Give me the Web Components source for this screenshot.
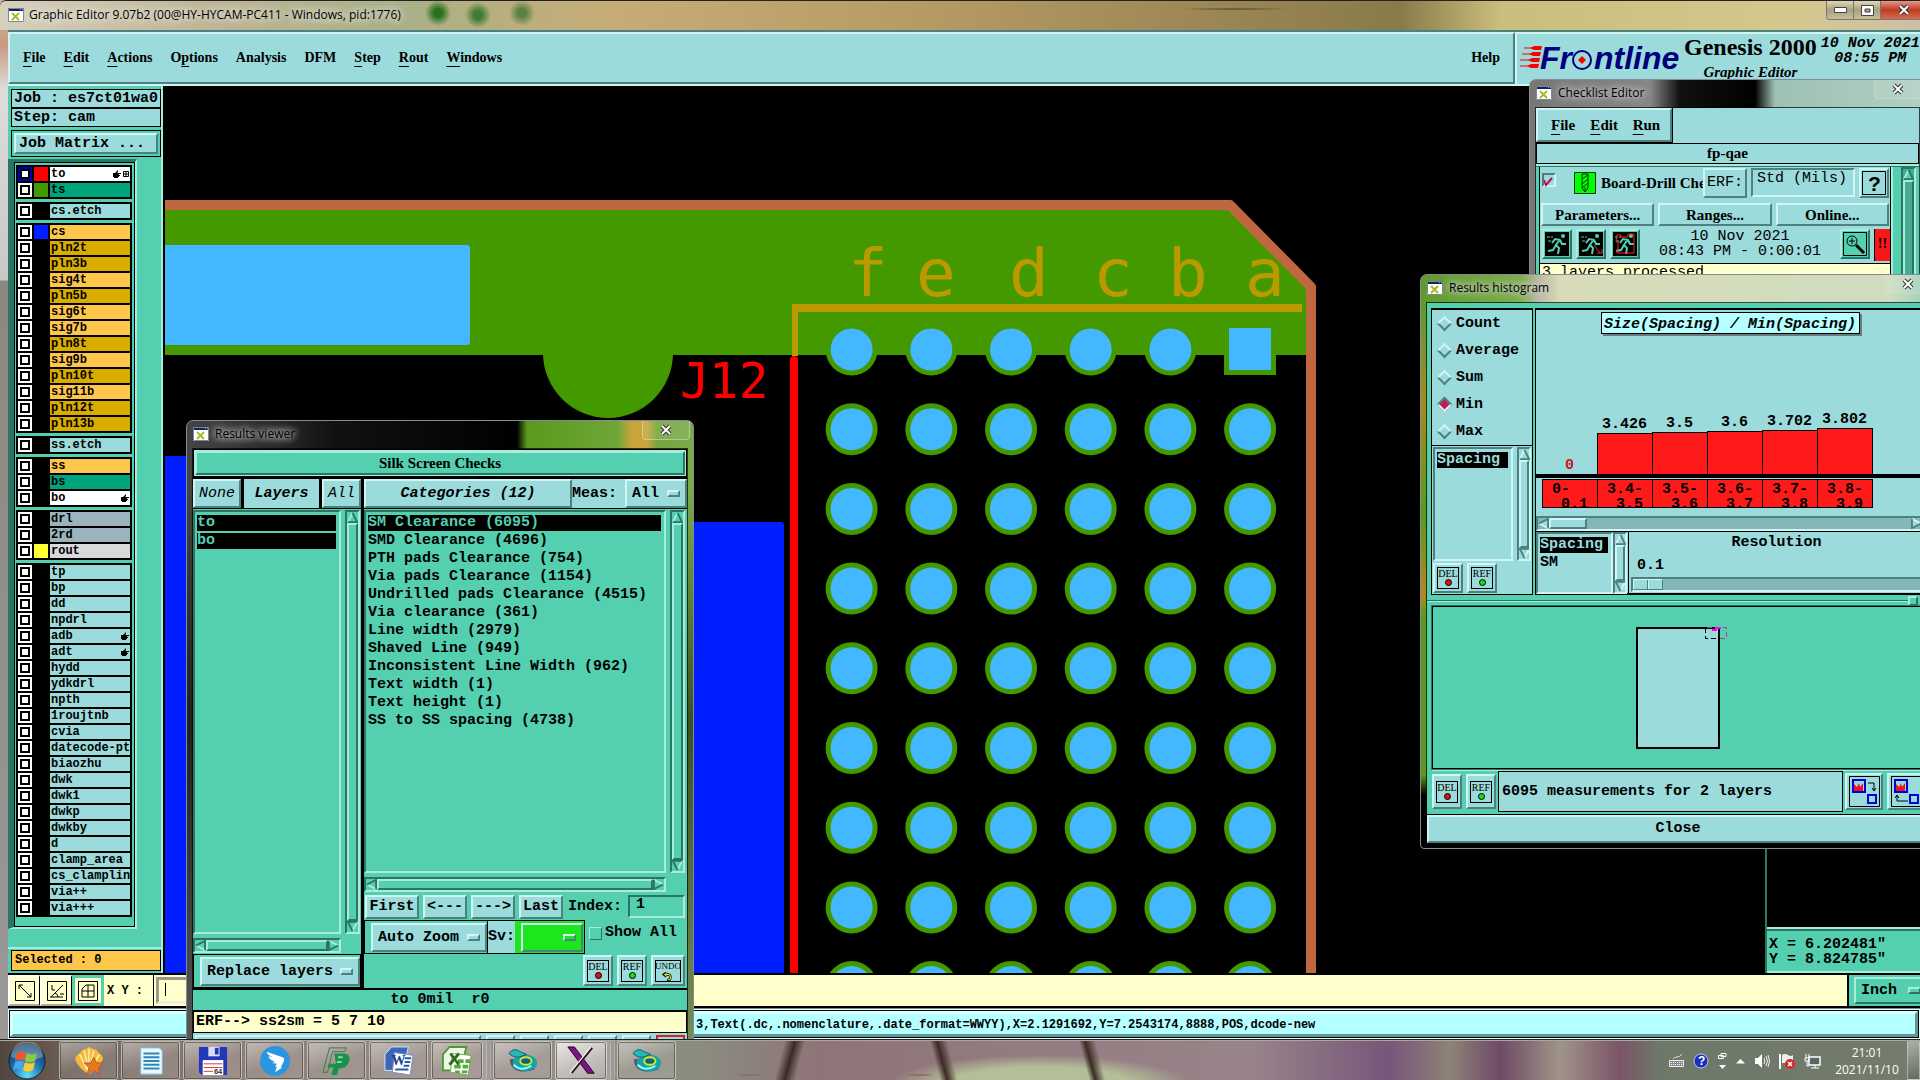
<!DOCTYPE html>
<html lang="en">
<head>
<meta charset="utf-8">
<title>Graphic Editor 9.07b2</title>
<style>
  :root {
    --teal: #54cfb0; --teal-hi: #a8ecdd; --teal-lo: #2c7565;
    --aqua: #9bdbdb; --aqua-hi: #cff6f4; --aqua-lo: #4f8080;
    --cream: #ffffcc; --pale: #b4ffff;
    --mono: "Liberation Mono", "DejaVu Sans Mono", monospace;
    --serif: "Liberation Serif", serif;
    --ui: "Open Sans", "Noto Sans", sans-serif;
  }
  body { margin: 0; font: bold 15px/18px var(--mono); color: #000; background: #000; }
</style>
</head>
<body>
<desk-top>
  <main-window></main-window>
  <aero-window id="checks" slot="windows" caption="Checklist Editor"><checklist-editor></checklist-editor></aero-window>
  <aero-window id="viewer" slot="windows" caption="Results viewer"><results-viewer></results-viewer></aero-window>
  <aero-window id="histo" slot="windows" caption="Results histogram"><results-histogram></results-histogram></aero-window>
  <task-bar slot="bar"></task-bar>
</desk-top>

<script>
/***************************************************
 * BASE
 * shared rules for every shadow root
 ***************************************************/
const BASE = `
  *, *::before, *::after { box-sizing: border-box; }
  :host { display: block; box-sizing: border-box; }
  button, input, select { font: inherit; color: inherit; margin: 0; padding: 0; border-radius: 0; min-width: 0; }
  ul { list-style: none; margin: 0; padding: 0; }
  .row { display: flex; }
  .grow { flex: 1; min-width: 0; }
  .aqua { --face: var(--aqua); --hi: var(--aqua-hi); --lo: var(--aqua-lo); }
  .teal { --face: var(--teal); --hi: var(--teal-hi); --lo: var(--teal-lo); }
  .up { border: 2px solid; border-color: var(--hi) var(--lo) var(--lo) var(--hi); background: var(--face); }
  .down { border: 2px solid; border-color: var(--lo) var(--hi) var(--hi) var(--lo); background: var(--face); }
`;

class Widget extends HTMLElement {
  constructor() {
    super();
    this.attachShadow({ mode: 'open' });
  }
  connectedCallback() {
    this.shadowRoot.innerHTML = `<style>${BASE}${this.css()}</style>${this.html()}`;
  }
  css() { return ''; }
  html() { return '<slot></slot>'; }
}

/***************************************************
 * MOTIF CONTROLS
 ***************************************************/
class MotifButton extends Widget {
  css() {
    return `button { width: 100%; height: 100%; display: flex; align-items: center; justify-content: center; white-space: pre; }
      :host([start]) button { justify-content: flex-start; padding-left: 3px; }`;
  }
  html() {
    const tone = this.hasAttribute('teal') ? 'teal' : 'aqua';
    return `<button class="up ${tone}"><slot></slot></button>`;
  }
}

// option menu with the small raised knob
class MotifOption extends Widget {
  css() {
    return `.box { display: flex; align-items: center; height: 100%; padding: 0 5px; }
      select { appearance: none; border: 0; background: none; flex: 1; height: 20px; outline: 0; }
      i { width: 13px; height: 7px; flex: none; }`;
  }
  html() {
    const tone = this.hasAttribute('teal') ? 'teal' : 'aqua';
    const face = this.hasAttribute('green') ? 'style="--face:#1ce61c"' : '';
    return `<div class="box up ${tone}" ${face}>
      <select aria-label="${this.getAttribute('label')}"><option>${this.getAttribute('value') || ''}</option></select>
      <i class="up"></i></div>`;
  }
}

class MotifScroll extends Widget {
  css() {
    return `.bar { display: flex; flex-direction: column; width: 100%; height: 100%; }
      :host([flat]) .bar { flex-direction: row; }
      svg { width: 11px; height: 11px; flex: none; display: block; }
      .thumb { flex: 1; }
      :host([short]) .thumb { flex: none; width: 38px; }
      :host([short]) .bar, :host([trough]) .bar { background: #83b8b8; }
      :host([trough]) .bar, :host([trough]) .thumb { background: #45ab92; }
      .sp { flex: 1; display: none; }
      :host([short]) .sp { display: block; }`;
  }
  html() {
    const tone = this.hasAttribute('aqua') ? 'aqua' : 'teal';
    const flat = this.hasAttribute('flat');
    const arrow = d => `<svg viewBox="0 0 12 12"><g transform="rotate(${d} 6 6)">
      <path d="M6 1L11 11H1Z" style="fill:var(--face)"/>
      <path d="M1 11L6 1" stroke-width="2" style="stroke:var(--hi)"/>
      <path d="M6 1L11 11H1" fill="none" stroke-width="2" style="stroke:var(--lo)"/></g></svg>`;
    return `<div class="bar down ${tone}">${arrow(flat ? -90 : 0)}<div class="thumb up"></div><div class="sp"></div>${arrow(flat ? 90 : 180)}</div>`;
  }
}

// list box; items split by "|", first "marked" ones are inverted
class MotifList extends Widget {
  css() {
    return `.box { height: 100%; padding: 2px 3px 2px 2px; overflow: hidden; }
      li { height: 18px; padding: 1px 0; white-space: pre; }
      li span { display: block; height: 16px; line-height: 16px; }
      li.on span { background: #000; color: var(--face); }`;
  }
  html() {
    const tone = this.hasAttribute('aqua') ? 'aqua' : 'teal';
    const marked = Number(this.getAttribute('marked'));
    const items = this.getAttribute('items').split('|');
    return `<ul class="box down ${tone}">${items.map((t, i) =>
      `<li class="${i < marked ? 'on' : ''}"><span>${t}</span></li>`).join('')}</ul>`;
  }
}

// square button with a framed pictogram
class ToolButton extends Widget {
  css() {
    return `button { width: 100%; height: 100%; display: flex; align-items: center; justify-content: center; }
      .pic { width: 22px; height: 22px; border: 1px solid #000; display: flex; flex-direction: column; align-items: center;
        font: 10px/11px var(--serif); }
      :host([wide]) .pic { width: 26px; font-size: 9px; }
      .dot { width: 7px; height: 7px; border: 1px solid #000; border-radius: 50%; }`;
  }
  html() {
    const kind = this.getAttribute('kind');
    const mark = {
      DEL: '<span class="dot" style="background:#e01010"></span>',
      REF: '<span class="dot" style="background:#18e018"></span>',
      UNDO: '<svg width="12" height="11" viewBox="0 0 12 11"><path d="M4 1L1 3l3 2.500M2 3h4q3 0 3 3.500T5 10" fill="none" stroke="#000" stroke-width="3"/><path d="M4 2L2 3l2 2M3 3h3q3 0 3 3.500T6 9.500" fill="none" stroke="#ee3" stroke-width="1.300"/></svg>'
    }[kind];
    return `<button class="up aqua"><span class="pic">${kind}${mark}</span></button>`;
  }
}

const X_ICON = `<svg width="16" height="16" viewBox="0 0 16 16"><path d="M0 1h16v14H0Z" fill="#fff"/>
  <path d="M0 1h16v3H0Z" fill="#126"/><path d="M12 2h1m1 0h1" stroke="#fff"/>
  <path d="M4 6l7 7M11 6l-7 7" stroke="#ab2" stroke-width="2"/><path d="M.5 1.500h15v13H.5Z" fill="none" stroke="#789"/></svg>`;
const CLOSE_ICON = `<svg width="12" height="12" viewBox="0 0 12 12"><path d="M2 2l8 8M10 2l-8 8" stroke="#333" stroke-width="4"/>
  <path d="M2 2l8 8M10 2l-8 8" stroke="#fff" stroke-width="2"/></svg>`;

/***************************************************
 * WINDOWS
 ***************************************************/
class AeroWindow extends Widget {
  css() {
    return `:host { position: absolute; display: flex; flex-direction: column; padding: 0 5px 4px;
        background: var(--glass); border: 1px solid #889; border-radius: 7px 7px 4px 4px; }
      header { display: flex; height: 27px; padding-left: 1px; gap: 6px; flex: none; font: 12px/26px var(--ui); margin-right: -2px; }
      header svg { flex: none; }
      header > svg { margin-top: 5px; }
      .t { flex: 1; text-shadow: 0 0 6px #ddd, 0 0 9px #ccc, 0 0 12px #aaa; }
      header button { width: 48px; height: 19px; background: rgba(255,255,255,.1); border: 1px solid rgba(210,220,200,.6);
        border-top: 0; border-radius: 0 0 4px 4px; display: flex; align-items: center; justify-content: center; }
      .in { flex: 1; min-height: 0; border: 1px solid rgba(0,0,0,.7); overflow: hidden; }`;
  }
  html() {
    return `<header>${X_ICON}<span class="t">${this.getAttribute('caption')}</span>
      <button aria-label="Close window">${CLOSE_ICON}</button></header><div class="in"><slot></slot></div>`;
  }
}

class DeskTop extends Widget {
  css() {
    return `:host { position: relative; display: flex; flex-direction: column; height: 100vh; overflow: hidden; }
      ::slotted(main-window) { flex: 1; min-height: 0; }
      ::slotted(task-bar) { position: relative; z-index: 2; height: 40px; }
      ::slotted(#checks) { right: -6px; top: 79px; width: 397px; height: 420px;
        --glass: linear-gradient(90deg, #777 0, #888 120px, #111 150px, #000 225px, #9fc0b4 245px, #b0d0c4); }
      ::slotted(#viewer) { left: 186px; top: 420px; width: 508px; bottom: 7px;
        --glass: linear-gradient(#0000 70px, #0008 300px, #7777), linear-gradient(90deg, #444 0, #333 60px, #111 150px, #000 330px, #5a9a1c 340px, #6ea638 430px, #c9a53c 445px, #c9a53c 460px, #74a63c 470px, #7bab48); }
      ::slotted(#histo) { right: -16px; top: 274px; width: 516px; height: 575px;
        --glass: linear-gradient(#0000 30px, #b8861acc 130px, #5a9a1c 240px, #b8861a 320px, #5a9a1c 340px, #5a9a1c 500px, #000 520px), linear-gradient(90deg, #5f9a2c 0, #7cb04a 100px, #b9b9a0 115px, #d8dcb8 140px, #cfdcc0 470px, #90cdb8); }`;
  }
  html() { return '<slot></slot><slot name="windows"></slot><slot name="bar"></slot>'; }
}

/***************************************************
 * MENU BAR  (underscore marks the mnemonic letter)
 ***************************************************/
class MenuBar extends Widget {
  css() {
    return `nav { height: 100%; display: flex; align-items: center; gap: 18px; padding: 0 13px;
        font: bold var(--size, 14px)/18px var(--serif); }
      button { border: 0; background: none; }
      u { text-underline-offset: 4px; text-decoration-thickness: 1px; }
      .last { margin-left: auto; }`;
  }
  html() {
    const item = (t, c = '') => `<button class="${c}">${t.replace(/_(.)/, '<u>$1</u>')}</button>`;
    return `<nav class="up aqua">${this.getAttribute('items').split('|').map(t => item(t)).join('')}
      ${this.hasAttribute('help') ? item('Help', 'last') : ''}</nav>`;
  }
}

class BrandPanel extends Widget {
  css() {
    return `:host { background: var(--aqua); border-left: 2px solid var(--aqua-hi); border-top: 2px solid var(--aqua-hi); }
      .row { gap: 4px; align-items: flex-start; white-space: nowrap; padding-left: 3px; }
      svg { flex: none; margin-top: 9px; overflow: visible; }
      .name { text-align: center; font: bold 24px/26px var(--serif); flex: none; }
      .name em { display: block; font: italic bold 15px/18px var(--serif); margin-top: 3px; }
      .date { font: italic bold 15px/15px var(--mono); text-align: center; padding-top: 2px; flex: none; }`;
  }
  html() {
    return `<div class="row">
      <svg width="160" height="32" viewBox="0 0 160 32">
        <g stroke="#f00" stroke-width="1"><path d="M4 5h13M2 11h14M0 17h14M0 23h14"/></g>
        <g fill="#f00"><path d="M10 5l4-2h8l-1 4h-7ZM9 11l4-2h8l-1 4h-7ZM8 17l4-2h8l-1 4h-7ZM7 23l4-2h8l-1 4h-7Z"/></g>
        <g fill="#00007c" font-family="Liberation Sans" font-weight="bold" font-style="italic" font-size="32">
          <text x="20" y="26">Fr</text><text x="74" y="26">ntline</text></g>
        <circle cx="62" cy="17" r="9" fill="none" stroke="#00007c" stroke-width="2"/>
        <path d="M62 13l4 4-4 4-4-4Z" fill="#f00"/>
      </svg>
      <div class="name">Genesis 2000<em>Graphic Editor</em></div>
      <div class="date">10 Nov 2021<br>08:55 PM</div>
    </div>`;
  }
}

/***************************************************
 * LAYERS  [name, colour, swatch, marks]
 ***************************************************/
const O = '#ffc64c', G = '#dbac00', A = '#9bdbdb', M = '#00a57c', S = '#9ab3bd', W = '#fff';
const LAYERS = [
  [['to', W, '#f00', 'hg'], ['ts', M, '#449900']],
  [['cs.etch', A]],
  [['cs', O, '#001eff'], ['pln2t', G], ['pln3b', G], ['sig4t', O], ['pln5b', G], ['sig6t', O], ['sig7b', O],
   ['pln8t', G], ['sig9b', O], ['pln10t', G], ['sig11b', O], ['pln12t', G], ['pln13b', G]],
  [['ss.etch', A]],
  [['ss', O], ['bs', M], ['bo', W, '', 'h']],
  [['drl', S], ['2rd', S], ['rout', '#d9d9d9', '#ffff33']],
  ['tp', 'bp', 'dd', 'npdrl', 'adb', 'adt', 'hydd', 'ydkdrl', 'npth', '1roujtnb', 'cvia', 'datecode-pte', 'biaozhu',
   'dwk', 'dwk1', 'dwkp', 'dwkby', 'd', 'clamp_area', 'cs_clampline', 'via++', 'via+++']
    .map(n => [n, A, '', n.startsWith('ad') ? 'h' : ''])
];

class LayerList extends Widget {
  css() {
    return `:host { border: 2px solid; border-color: var(--teal-lo) var(--teal-hi) var(--teal-hi) var(--teal-lo);
        border-left-width: 6px; border-top-width: 3px; background: var(--teal); }
      .frame { border: 1px solid #000; padding: 2px 2px 9px 1px; display: grid; gap: 3px; }
      .group { background: #000; padding: 1px 2px; font: bold 12px/14px var(--mono); }
      .layer { display: grid; grid-template-columns: 14px 14px 1fr; gap: 2px; padding: 1px 0; height: 16px; }
      input { appearance: none; width: 14px; height: 14px; border: 2px solid #fff; background: #fff; box-shadow: inset 0 0 0 2px #000; }
      input:checked { border-color: #0000b0; }
      label { display: flex; align-items: center; padding: 0 1px; overflow: hidden; white-space: nowrap; min-width: 0; }
      label svg { flex: none; margin-left: 2px; }
      label span { flex: 1; }`;
  }
  html() {
    const hand = '<svg width="8" height="8" viewBox="0 0 8 8"><path d="M0 3h2l3-3v2l-1 1h4v1H6v1h1v1H6v1H5v1H1V7H0Z"/></svg>';
    const grid = '<svg width="6" height="6" viewBox="0 0 6 6"><path d="M.5.5h5v5h-5ZM3 0v6M0 3h6" fill="none" stroke="#000"/></svg>';
    const row = ([name, bg, sw = '', marks = '']) => `<div class="layer">
      <input type="checkbox" id="${name}" ${name === 'to' ? 'checked' : ''}><i style="background:${sw || '#000'}"></i>
      <label for="${name}" style="background:${bg}"><span>${name}</span>${marks.includes('h') ? hand : ''}${marks.includes('g') ? grid : ''}</label></div>`;
    return `<div class="frame">${LAYERS.map(g => `<div class="group">${g.map(row).join('')}</div>`).join('')}</div>`;
  }
}

/***************************************************
 * BOARD
 ***************************************************/
class BoardView extends Widget {
  css() { return ':host { background: #000; overflow: hidden; } svg { display: block; width: 100%; height: 100%; font-weight: normal; }'; }
  html() {
    let pads = '';
    for (let r = 0; r < 9; r++) {
      for (let c = 0; c < 6; c++) {
        const x = 851.6 + c * 79.7, y = 349.5 + r * 79.7;
        pads += r === 0 && c === 5
          ? '<path d="M1224 323h52v52h-52Z" fill="#449900"/><path d="M1229 328h42v42h-42Z" fill="#44b8ff"/>'
          : `<circle cx="${x}" cy="${y}" r="26" fill="#449900"/><circle cx="${x}" cy="${y}" r="21" fill="#44b8ff"/>`;
      }
    }
    return `<svg><g transform="translate(-165 -86)">
      <rect x="160" y="456" width="400" height="540" fill="#001eff"/>
      <rect x="540" y="522" width="244" height="480" rx="3" fill="#001eff"/>
      <circle cx="608" cy="353" r="65" fill="#449900"/>
      <path d="M165 205H1230L1311 288V355H165Z" fill="#449900"/>
      <rect x="155" y="245" width="315" height="100" rx="3" fill="#44b8ff"/>
      <path d="M160 205H1230L1311 287V990" fill="none" stroke="#bf6840" stroke-width="10" stroke-linejoin="round"/>
      <path d="M792 304H1302v8H798v44h-6Z" fill="#bb9900"/>
      <path d="M794 360V990" stroke="#f00" stroke-width="8" stroke-linecap="round"/>
      <g font-family="DejaVu Sans Mono">
        <text x="680 709 739" y="398" font-size="49" fill="#f00">J12</text>
        <text x="848 916 1009 1093 1168 1245" y="296" font-size="66" fill="#bb9900">fedcba</text>
      </g>${pads}</g></svg>`;
  }
}

class MainWindow extends Widget {
  css() {
    return `:host { display: flex; flex-direction: column; padding-left: 8px; position: relative;
        background: linear-gradient(#c5bba0 0, #c99a80 45px, #ddd 90px, #c8c8c8 280px, #8c8880 281px, #999 100%); }
      header { display: flex; height: 30px; flex: none; margin-left: -8px; padding-left: 8px; gap: 5px; font: 12px/28px var(--ui);
        border-top: 1px solid #222; border-radius: 6px 0 0 0;
        background: radial-gradient(circle at 438px 12px, #27701c 4px, #0000 13px), radial-gradient(circle at 478px 14px, #3f7c32 4px, #0000 13px),
          radial-gradient(circle at 522px 12px, #5b8146 4px, #0000 13px), radial-gradient(ellipse at 1235px 8px, #4c4028 4px, #0000 60px),
          linear-gradient(90deg, #d6d0bd, #bfb596 200px, #a9b088 400px, #c6ad78 600px, #b89c66 900px, #8a7a4a 1400px, #cbbd7c 1500px, #d4c88e 1800px, #cdbfa8); }
      header > svg { margin-top: 6px; }
      header .t { flex: 1; text-shadow: 0 0 8px #eee, 0 0 8px #eee; }
      .ctl { display: flex; height: 19px; border: 1px solid #777; border-top: 0; border-radius: 0 0 0 4px; overflow: hidden; margin-right: -9px; }
      .ctl button { width: 27px; border: 0; border-right: 1px solid #777; background: linear-gradient(#ddd6b8, #a9a080 50%, #c8be96);
        display: flex; align-items: center; justify-content: center; }
      .ctl button:last-child { width: 47px; background: linear-gradient(#e09a88, #c03a22 50%, #d86c50); }
      .top { display: grid; grid-template-columns: 1fr 405px; height: 56px; border-top: 2px solid var(--aqua-lo); border-bottom: 2px solid var(--aqua-hi); background: var(--aqua); flex: none; }
      .mid { display: grid; grid-template-columns: 157px 1fr; flex: 1; min-height: 0; }
      .side { background: var(--teal); border-right: 2px solid #000; box-shadow: inset -2px 0 var(--teal-hi); display: flex; flex-direction: column; padding: 3px 2px 0 3px; }
      .tag { height: 19px; border: 1px solid #000; background: var(--aqua); padding: 0 2px; line-height: 18px; white-space: nowrap; flex: none; }
      .matrix { height: 27px; border: 1px solid #000; margin: 3px 0 2px; padding: 2px; flex: none; }
      .matrix motif-button { height: 100%; }
      layer-list { margin-left: -3px; width: 129px; flex: none; }
      .space { flex: 1; margin: 0 -2px 0 -3px; border-bottom: 2px solid var(--teal-hi); }
      .sel { height: 21px; border: 1px solid #000; background: #ffc64c; font: bold 12px/19px var(--mono); padding-left: 3px; margin: 1px 0 2px; flex: none; }
      .work { position: relative; min-width: 0; }
      board-view { height: 100%; }
      .popup { position: absolute; right: 0; top: 150px; bottom: 0; width: 155px; background: #000; border-left: 2px solid var(--teal-lo); display: flex; flex-direction: column; justify-content: flex-end; }
      .popup p { margin: 0; height: 46px; background: var(--teal); border: 2px solid; border-color: var(--teal-hi) var(--teal-lo) var(--teal-hi) var(--teal-hi); border-width: 2px 0; padding: 8px 2px 0; line-height: 15px; white-space: pre; box-shadow: inset 0 2px var(--teal-lo); }
      .xy { display: flex; height: 35px; border: 2px solid #000; border-width: 2px 0; background: var(--cream); flex: none; font: bold 12px/32px var(--mono); }
      .xy .tool { width: 32px; border: 2px solid; border-color: #fff #aa9 #aa9 #fff; background: var(--cream); border-right: 1px solid #000; display: flex; align-items: center; justify-content: center; }
      .xy .tool.on { border: 3px solid var(--teal); }
      .xy label { padding: 0 10px 0 3px; border-right: 1px solid #000; white-space: pre; }
      .xy input { width: 260px; border: 3px solid #aa9; border-color: #998 #eed #eed #998; margin: 2px; background: linear-gradient(#000, #000) 6px 3px / 1px 13px no-repeat, var(--cream); }
      .xy .unit { margin-left: auto; width: 73px; background: var(--teal); border-left: 2px solid #000; padding: 2px 0 2px 5px; overflow: hidden; font: bold 15px/18px var(--mono); }
      .unit motif-option { width: 74px; height: 27px; }
      .status { flex: none; height: 32px; padding: 2px 1px; background: #6c9494; }
      .status div { height: 100%; border: 1px solid #000; outline: 1px solid #e8ffff; }
      .status p { margin: 0; height: 100%; border: 3px solid; border-color: #dff #5f9797 #5f9797 #dff; background: var(--pale); font: bold 12px/22px var(--mono); padding-left: 683px; white-space: nowrap; overflow: hidden; }`;
  }
  html() {
    const pic = d => `<svg width="20" height="20" viewBox="0 0 20 20" fill="none" stroke="#000"><path d="M.5.5h19v19H.5Z"/><path d="${d}"/></svg>`;
    return `<header>${X_ICON}<span class="t">Graphic Editor 9.07b2 (00@HY-HYCAM-PC411 - Windows, pid:1776)</span>
      <span class="ctl"><button aria-label="Minimize"><svg width="13" height="6"><path d="M.5.5h12v5H.5Z" fill="#fff" stroke="#444"/></svg></button>
      <button aria-label="Maximize"><svg width="13" height="11"><path d="M.5.5h12v10H.5Z" fill="#fff" stroke="#444"/><path d="M4 4h5v3H4Z" fill="#a9a080" stroke="#444"/></svg></button>
      <button aria-label="Close">${CLOSE_ICON}</button></span></header>
    <div class="top"><menu-bar items="_File|_Edit|_Actions|O_ptions|Analysis|DFM|_Step|_Rout|_Windows" help></menu-bar><brand-panel></brand-panel></div>
    <div class="mid">
      <div class="side">
        <div class="tag">Job : es7ct01wa0</div><div class="tag">Step: cam</div>
        <div class="matrix"><motif-button start>Job Matrix ...</motif-button></div>
        <layer-list></layer-list><div class="space"></div><div class="sel">Selected : 0</div>
      </div>
      <div class="work"><board-view></board-view>
        <div class="popup"><p>X = 6.202481"
Y = 8.824785"</p></div></div>
    </div>
    <div class="xy">
      <button class="tool" aria-label="Zoom area">${pic('M4 4l12 12M4 8V4h4M12 16h4v-4')}</button>
      <button class="tool" aria-label="Angle">${pic('M3 16h13M4 16L16 4M5 4v5h3M8 12q3 1 3 4M13 13h4')}</button>
      <button class="tool on" aria-label="Grid">${pic('M4 16V8l4-4h8v12ZM4 10h12M10 4v12')}</button>
      <label for="xy">X Y :</label><input id="xy">
      <div class="unit"><motif-option teal label="Units" value="Inch"></motif-option></div>
    </div>
    <div class="status"><div><p>3,Text(.dc,.nomenclature,.date_format=WWYY),X=2.1291692,Y=7.2543174,8888,POS,dcode-new</p></div></div>`;
  }
}

/***************************************************
 * RESULTS VIEWER
 ***************************************************/
class ResultsViewer extends Widget {
  css() {
    return `:host { height: 100%; display: flex; flex-direction: column; background: var(--teal); }
      h2 { margin: 0; height: 28px; font: bold 15px/21px var(--serif); text-align: center; border: 1px solid #000; background: var(--teal-hi); padding: 1px; flex: none; }
      h2 span { display: block; height: 24px; }
      .cols { display: grid; grid-template-columns: 168px minmax(0, 1fr); gap: 3px; flex: 1; min-height: 0; background: #000; padding: 2px 0; }
      .cols > div { display: flex; flex-direction: column; background: var(--teal); min-height: 0; min-width: 0; }
      .head { display: flex; height: 30px; flex: none; border-bottom: 1px solid #000; }
      .head motif-button { font-style: italic; }
      .thin { font-weight: normal; }
      .lay { flex: 1; text-align: center; font-style: italic; background: var(--aqua); border: 3px solid #000; border-width: 0 3px; line-height: 29px; }
      .body { display: grid; grid-template-columns: minmax(0, 1fr) 15px; grid-template-rows: minmax(0, 1fr) 15px; gap: 4px; flex: 1; min-height: 0; padding: 1px 1px 1px 0; }
      .right .body { padding-right: 2px; }
      .opt { height: 34px; border: 1px solid #000; padding: 2px 0 2px 6px; flex: none; }
      .opt motif-option { height: 29px; }
      .nav { display: flex; height: 24px; gap: 4px; padding: 0 2px 0 1px; margin-top: 2px; flex: none; }
      .nav label { line-height: 24px; padding: 0 2px 0 1px; }
      .nav input { flex: 1; width: 0; padding-left: 6px; height: 23px; padding-bottom: 5px; }
      .zoom { display: flex; height: 34px; margin-top: 1px; flex: none; }
      .zoom .a { width: 124px; }
      .sv { border: 1px solid #000; border-left: 0; display: flex; width: 97px; line-height: 32px; background: var(--aqua); }
      .sv div { background: #1ce61c; flex: 1; padding: 2px 1px 1px 6px; }
      .sv motif-option { height: 29px; }
      .show { display: flex; align-items: center; gap: 3px; padding: 0 0 8px 4px; white-space: nowrap; }
      .show input { appearance: none; width: 13px; height: 13px; border-width: 1px; }
      .tools { display: flex; gap: 4px; justify-content: flex-end; height: 34px; padding: 1px 2px 2px; flex: none; }
      .tools tool-button { width: 30px; }
      .tools tool-button[wide] { width: 34px; }
      .note { height: 22px; border-bottom: 2px solid #000; text-align: center; line-height: 19px; white-space: pre; flex: none; }
      .erf { height: 21px; border: 1px solid #000; border-width: 0 1px 1px; background: var(--cream); padding-left: 2px; line-height: 19px; white-space: pre; flex: none; }
      .foot { display: flex; gap: 5px; height: 34px; background: var(--aqua); padding: 2px 2px 0; flex: none; }
      .foot button { width: 29px; padding: 2px; }
      .foot button i { display: block; height: 24px; border: 1px solid #000; }`;
  }
  html() {
    const cats = 'SM Clearance (6095)|SMD Clearance (4696)|PTH pads Clearance (754)|Via pads Clearance (1154)|Undrilled pads Clearance (4515)|Via clearance (361)|Line width (2979)|Shaved Line (949)|Inconsistent Line Width (962)|Text width (1)|Text height (1)|SS to SS spacing (4738)';
    const foot = ['linear-gradient(90deg, #9bdbdb 8px, #000 8px 12px, #ee2 12px)', 'linear-gradient(90deg, #000 15px, #922 15px)',
      'linear-gradient(135deg, #e33 5px, #9bdbdb 5px)', '#1ce61c', 'linear-gradient(90deg, #9bdbdb 4px, #ee2 4px 18px, #9bdbdb 18px)', 'linear-gradient(90deg, #9bdbdb 13px, #a0a 13px 16px, #9bdbdb 16px)'];
    return `<h2><span class="up teal">Silk Screen Checks</span></h2>
    <div class="cols">
      <div>
        <div class="head"><motif-button class="thin" style="width:48px">None</motif-button><span class="lay">Layers</span><motif-button class="thin" style="width:39px">All</motif-button></div>
        <div class="body"><motif-list items="to|bo" marked="2"></motif-list><motif-scroll></motif-scroll><motif-scroll flat></motif-scroll></div>
        <div class="opt"><motif-option label="Layer mode" value="Replace layers"></motif-option></div>
      </div>
      <div class="right">
        <div class="head aqua" style="background:var(--aqua)"><motif-button style="width:208px">Categories (12)</motif-button>
          <span class="grow" style="line-height:30px">Meas:</span><motif-option style="width:62px" label="Measurements" value="All"></motif-option></div>
        <div class="body"><motif-list items="${cats}" marked="1"></motif-list><motif-scroll></motif-scroll><motif-scroll flat></motif-scroll></div>
        <div class="nav"><motif-button style="width:54px">First</motif-button><motif-button style="width:44px">&lt;---</motif-button><motif-button style="width:44px">---&gt;</motif-button><motif-button style="width:44px">Last</motif-button>
          <label for="idx">Index:</label><input id="idx" class="down teal" value="1"></div>
        <div class="zoom"><div class="opt a"><motif-option label="Zoom mode" value="Auto Zoom"></motif-option></div>
          <div class="sv">Sv:<div><motif-option green label="Severity"></motif-option></div></div>
          <span class="show"><input type="checkbox" id="all" class="up teal"><label for="all">Show All</label></span></div>
        <div class="tools"><tool-button kind="DEL"></tool-button><tool-button kind="REF"></tool-button><tool-button kind="UNDO" wide></tool-button></div>
      </div>
    </div>
    <div class="note">to 0mil  r0</div>
    <div class="erf">ERF--&gt; ss2sm = 5 7 10</div>
    <div class="foot"><div class="grow up aqua"></div>${foot.map((b, i) =>
      `<button class="up aqua" aria-label="Action ${i + 1}" ${i === 5 ? 'style="border-color:#c22"' : ''}><i style="background:${b}"></i></button>`).join('')}</div>`;
  }
}

/***************************************************
 * CHECKLIST EDITOR
 ***************************************************/
class ChecklistEditor extends Widget {
  css() {
    return `:host { height: 100%; display: flex; flex-direction: column; background: var(--aqua); font-weight: normal; }
      menu-bar { width: 137px; height: 35px; --size: 15px; border: 1px solid #000; border-width: 0 1px 1px 0; flex: none; }
      h2 { margin: 0; height: 21px; font: bold 15px/19px var(--serif); text-align: center; border: 1px solid #000; flex: none; }
      .main { display: flex; flex: 1; background: var(--teal); padding: 3px 3px 0 3px; box-shadow: inset 0 2px var(--teal-hi), inset 0 3px var(--teal-lo); min-height: 0; }
      .item { flex: 1; background: var(--aqua); display: flex; flex-direction: column; border: 1px solid #000; border-width: 0 1px; margin-right: 10px; min-width: 0; }
      .a { display: flex; height: 31px; padding: 0 1px; font-weight: bold; align-items: center; }
      .a input[type=checkbox] { appearance: none; width: 14px; height: 14px; margin: 0 18px 6px 1px; flex: none; }
      .a label { flex: 1; margin-left: 5px; overflow: hidden; white-space: nowrap; font: bold 15px/20px var(--serif); }
      .a > svg { flex: none; }
      .a motif-button { height: 30px; font-weight: normal; flex: none; }
      .a .std { width: 104px; height: 29px; margin: 0 4px; padding: 0 0 9px 4px; font-weight: normal; }
      .b { display: flex; gap: 4px; height: 23px; margin: 5px 1px 3px; font: bold 15px/18px var(--serif); }
      .b motif-button { flex: 1; }
      .c { display: flex; height: 32px; }
      .c > button { width: 30px; height: 30px; display: flex; align-items: center; justify-content: center; margin: 0 2px; flex: none; }
      .c p { margin: 0; flex: 1; text-align: center; line-height: 15px; white-space: nowrap; }
      .bad { width: 16px; margin: 0 0 0 2px; background: #f81818; font: bold 14px/30px var(--serif); text-align: center; border-left: 1px solid #000; flex: none; }
      .msg { height: 90px; margin-top: 2px; border-top: 1px solid #000; background: var(--cream); padding: 1px 0 0 2px; line-height: 16px; }
      motif-scroll { width: 15px; box-shadow: -8px 0 var(--teal), -10px 0 var(--teal-hi); }`;
  }
  html() {
    const check = '<svg width="13" height="13" viewBox="0 0 13 13" style="position:absolute;pointer-events:none"><path d="M3 4l2 5 6-7" fill="none" stroke="#c0104c" stroke-width="2"/></svg>';
    const runner = extra => `<svg width="24" height="24" viewBox="0 0 24 24"><path d="M0 0h24v24H0Z"/>
      <g fill="none" stroke="#54cfb0" stroke-width="2"><path d="M15 7l-4 6 3 3-1 6M11 13l-3 5-5 1M15 8l-5-1-3 4M15 8l2 4h4"/></g>
      <circle cx="18" cy="4" r="2" fill="#54cfb0"/><path d="M2 5h3m1 0h2M3 9h3" stroke="#54cfb0"/>${extra}</svg>`;
    return `<menu-bar items="_File|_Edit|_Run"></menu-bar><h2>fp-qae</h2>
    <div class="main"><div class="item">
      <div class="a"><input type="checkbox" id="drill" class="down aqua" checked>${check}
        <svg width="22" height="22" viewBox="0 0 22 22"><path d="M.5.5h21v21H.5Z" fill="#0f0" stroke="#040"/><path d="M8 2h6v14l-3 4-3-4ZM8 7l6-4M8 12l6-5M8 16l6-5M11 15v5" fill="none" stroke="#030"/></svg>
        <label for="drill">Board-Drill Che</label><motif-button style="width:44px">ERF:</motif-button>
        <input class="std down aqua" aria-label="ERF model" value="Std (Mils)"><motif-button style="width:30px"><svg width="24" height="24" viewBox="0 0 24 24" style="font:bold 21px 'Liberation Sans'"><path d="M.5.5h23v23H.5Z" fill="none" stroke="#000"/><text x="6" y="20">?</text></svg></motif-button></div>
      <div class="b"><motif-button>Parameters...</motif-button><motif-button>Ranges...</motif-button><motif-button>Online...</motif-button></div>
      <div class="c"><button class="up teal" aria-label="Run">${runner('')}</button>
        <button class="up teal" aria-label="Run on selected">${runner('<path d="M15 13l6 8M18 21h5v-4" stroke="#f22" fill="none"/>')}</button>
        <button class="up teal" aria-label="Run in area">${runner('<path d="M4 3h4v2h7V2h6v19H4v-4h1v-7H3Z" stroke="#f22" fill="none"/>')}</button>
        <p>10 Nov 2021<br>08:43 PM - 0:00:01</p>
        <button class="up teal" aria-label="View results"><svg width="24" height="24" viewBox="0 0 24 24" fill="none" stroke="#000"><path d="M.5.5h23v23H.5Z"/><circle cx="9" cy="9" r="5"/><path d="M9 6v6M6 9h6"/><path d="M13 13l8 8" stroke-width="3"/></svg></button>
        <div class="bad">!!</div></div>
      <div class="msg">3 layers processed</div>
    </div><motif-scroll trough></motif-scroll></div>`;
  }
}

/***************************************************
 * RESULTS HISTOGRAM
 ***************************************************/
class ValueChart extends Widget {
  css() {
    return `:host { background: var(--aqua); display: flex; flex-direction: column; overflow: hidden; }
      h3 { margin: 2px auto 0; width: 259px; height: 22px; border: 1px solid #000; background: var(--pale); box-shadow: 2px 2px #6a7c7c; font: italic bold 15px/24px var(--mono); text-align: center; white-space: nowrap; flex: none; }
      .bars { flex: 1; display: flex; align-items: flex-end; padding-left: 6px; border-bottom: 4px solid #000; }
      .bar { width: 55px; text-align: center; line-height: 17px; }
      .bar i { display: block; background: #ff1a1a; border: 1px solid #000; border-bottom: 0; margin-right: -1px; }
      .bar.zero { color: #c8141c; }
      .cells { display: flex; padding: 1px 0 0 6px; height: 38px; line-height: 15px; }
      .cells div { width: 56px; height: 29px; margin-right: -1px; border: 1px solid #000; background: #ff1a1a; padding: 2px 0 0 9px; white-space: pre; }`;
  }
  html() {
    const data = [[0, '0', '0.1'], [3.426, '3.4', '3.5'], [3.5, '3.5', '3.6'], [3.6, '3.6', '3.7'], [3.702, '3.7', '3.8'], [3.802, '3.8', '3.9']];
    return `<h3>Size(Spacing) / Min(Spacing)</h3>
      <div class="bars">${data.map(([v]) => `<div class="bar ${v ? '' : 'zero'}">${v}${v ? `<i style="height:${Math.round(v * 12)}px"></i>` : ''}</div>`).join('')}</div>
      <div class="cells">${data.map(([, a, b]) => `<div>${a}-\n ${b}</div>`).join('')}</div>`;
  }
}

class ResultsHistogram extends Widget {
  css() {
    return `:host { height: 100%; display: flex; flex-direction: column; background: var(--teal); }
      .top { display: grid; grid-template-columns: 102px 1fr; gap: 2px; height: 287px; margin: 5px 5px 0 4px; flex: none; }
      .left { background: var(--aqua); border: 1px solid #000; display: flex; flex-direction: column; }
      .kinds { border-bottom: 1px solid #000; border-top: 1px solid #000; }
      .kinds div { display: flex; align-items: center; height: 27px; padding-left: 7px; gap: 6px; }
      .kinds input { appearance: none; width: 11px; height: 11px; transform: rotate(45deg); }
      .kinds input:checked { background: #c8145a; border-color: var(--lo) var(--hi) var(--hi) var(--lo); }
      .pick { display: grid; grid-template-columns: minmax(0, 1fr) 14px; gap: 4px; flex: 1; padding: 1px; }
      .tools { display: flex; gap: 4px; height: 32px; padding: 1px; }
      .tools tool-button { width: 30px; }
      .right { display: flex; flex-direction: column; min-width: 0; border-top: 2px solid #000; border-left: 1px solid #000; background: var(--aqua); }
      value-chart { flex: 1; }
      .right > motif-scroll { height: 15px; }
      .res { display: grid; grid-template-columns: 77px 14px 1fr; height: 64px; border: 1px solid #000; border-width: 1px 0 2px; }
      .scale { border-left: 1px solid #000; margin-left: 1px; padding: 2px; display: flex; flex-direction: column; }
      .scale label { text-align: center; }
      .scale output { margin: 5px 0 2px 6px; }
      .scale input { appearance: none; height: 15px; width: 100%; background: #83b8b8; }
      .scale input::-webkit-slider-thumb { appearance: none; width: 30px; height: 11px; border: 1px solid; border-color: var(--aqua-hi) var(--aqua-lo) var(--aqua-lo) var(--aqua-hi); background: linear-gradient(90deg, #0000 13px, var(--aqua-lo) 13px 14px, var(--aqua-hi) 14px 15px, #0000 15px) var(--aqua); }
      .sash { height: 11px; display: flex; align-items: center; flex: none; }
      .sash::before { content: ""; flex: 1; height: 2px; border-top: 1px solid var(--teal-lo); background: var(--teal-hi); }
      .sash i { width: 10px; height: 10px; margin-right: 11px; }
      .map { flex: 1; margin: 0 0 0 5px; border: 1px solid #000; box-shadow: 0 0 0 1px var(--teal-lo), 0 2px var(--teal-hi); display: flex; justify-content: center; align-items: center; min-height: 0; }
      .map svg { overflow: visible; margin-right: 5px; }
      .foot { display: flex; gap: 4px; height: 46px; padding: 3px 4px 3px 5px; border-bottom: 1px solid #000; flex: none; }
      .foot tool-button { width: 30px; margin: 2px 0; }
      .foot p { flex: 1; margin: -1px -2px; border: 1px solid #000; background: var(--aqua); padding: 0 3px; line-height: 39px; white-space: nowrap; }
      .foot button { width: 38px; display: flex; align-items: center; justify-content: center; margin: 1px 0; }
      .close { height: 28px; flex: none; }`;
  }
  html() {
    const swap = d => `<svg width="31" height="31" viewBox="0 0 31 31" fill="none" stroke="#000"><path d="M.5.5h30v30H.5Z"/>
      <path d="M4 4h12v12H4Z" fill="#9bdbdb" stroke="#00d" stroke-width="2"/><path d="M5 15V8l3 3 2-4 1 4 3-4v8Z" fill="#e12" stroke="none"/>
      <path d="M19 19h8v8h-8Z" stroke="#00d" stroke-width="2"/><path d="${d}"/></svg>`;
    return `<div class="top">
      <div class="left">
        <div class="kinds">${['Count', 'Average', 'Sum', 'Min', 'Max'].map(k =>
          `<div><input type="radio" name="kind" id="${k}" class="up aqua" ${k === 'Min' ? 'checked' : ''}><label for="${k}">${k}</label></div>`).join('')}</div>
        <div class="pick"><motif-list aqua items="Spacing" marked="1"></motif-list><motif-scroll aqua></motif-scroll></div>
        <div class="tools"><tool-button kind="DEL"></tool-button><tool-button kind="REF"></tool-button></div>
      </div>
      <div class="right"><value-chart></value-chart><motif-scroll aqua flat short></motif-scroll>
        <div class="res"><motif-list aqua items="Spacing|SM" marked="1"></motif-list><motif-scroll aqua></motif-scroll>
          <div class="scale"><label for="res">Resolution</label><output>0.1</output><input type="range" id="res" class="down aqua" min="0" max="10" value="0"></div></div>
      </div>
    </div>
    <div class="sash"><i class="up teal"></i></div>
    <div class="map"><svg width="84" height="122" viewBox="0 0 84 122" fill="none"><path d="M1 1h82v120H1Z" fill="#9bdbdb" stroke="#000" stroke-width="2"/>
      <path d="M69.500 1v10.500H84" stroke="#000" stroke-dasharray="5 3"/><path d="M84 11.500h6.500V.5H69" stroke="#b04090" stroke-dasharray="5 3"/><path d="M76 3h4V1h5" stroke="#f0f" stroke-width="2"/></svg></div>
    <div class="foot"><tool-button kind="DEL"></tool-button><tool-button kind="REF"></tool-button><p>6095 measurements for 2 layers</p>
      <button class="up aqua" aria-label="Histogram to map">${swap('M19 7h6v8M23 12l2 3 2-3')}</button><button class="up aqua" aria-label="Map to histogram">${swap('M17 25H6v-5M4 22l2-3 2 3')}</button></div>
    <motif-button class="close">Close</motif-button>`;
  }
}

/***************************************************
 * TASK BAR
 ***************************************************/
class TaskBar extends Widget {
  css() {
    return `:host { display: flex; border-top: 1px solid #aaa89c; box-shadow: 0 -1px #222; color: #fff;
        background: linear-gradient(105deg, #0000 758px, #3a2a24 768px, #0000 778px), linear-gradient(75deg, #0000 908px, #3a2a24 915px, #0000 925px), linear-gradient(75deg, #0000 1052px, #3a2a24 1058px, #0000 1068px),
          radial-gradient(ellipse at 750px 34px, #8a4428 6px, #0000 22px), radial-gradient(ellipse at 920px 34px, #7c3a22 6px, #0000 20px),
          radial-gradient(ellipse 150px 30px at 1040px 44px, #b4bf98 60%, #0000),
          linear-gradient(90deg, #51463f 0, #6a5b53 60px, #8a7a74 200px, #9a8e88 500px, #8a8c80 700px, #8f7478 820px, #98848a 1250px, #77567a 1390px, #8d8378 1450px, #6e4a66 1500px, #a09488 1560px, #7a5468 1620px, #6d7868 1660px, #747c6c); }
      button { border: 0; background: none; display: flex; align-items: center; justify-content: center; }
      .start { width: 57px; padding-right: 3px; }
      .apps { display: flex; gap: 3px; flex: 1; padding-left: 2px; }
      .apps button { width: 59px; border: 1px solid #d8d8cc99; outline: 1px solid #3338; outline-offset: -2px; border-radius: 3px;
        background: linear-gradient(160deg, #fff7, #fff2 55%, #ddd3); }
      .apps .stack { width: 52px; margin-right: 7px; box-shadow: 3px 0 #7776, 4px 0 #ddd7, 7px 0 #7775, 8px 0 #ddd6; }
      .apps .on { background: linear-gradient(160deg, #fffc, #eee8 55%, #ddd6); }
      .tray { display: flex; align-items: center; gap: 9px; }
      time { text-align: center; font: 12px/17px var(--ui); width: 74px; padding: 1px 0 0; }
      .peek { width: 13px; border: 1px solid #ddd8; background: linear-gradient(160deg, #fff6, #3334); align-self: stretch; margin-left: -6px; }`;
  }
  html() {
    const svg = (s, n = 30) => `<svg width="${n}" height="${n}" viewBox="0 0 32 32">${s}</svg>`;
    const icam = svg('<path d="M2 14q0 9 8 12t18-1q4-8-1-13Z" fill="#557" /><ellipse cx="18" cy="18" rx="13" ry="9" fill="#11a5a5"/><path d="M6 20q8 8 19 1" stroke="#8ff" fill="none" stroke-width="2"/><ellipse cx="19" cy="16" rx="6" ry="4" fill="#166" stroke="#dd4" stroke-width="2"/><path d="M1 8q5-7 12-2l7 3-6 2q-6 3-13-3Z" fill="#2bb" stroke="#255"/>');
    const apps = [
      [svg('<path d="M16 30Q4 24 1 13q2-4 5-5l3-4 4-1 3-2 4 2 4 1 3 4q3 1 4 5-2 11-15 17Z" fill="#f6b93e"/><path d="M16 29L6 9M16 29L11 5M16 29V3M16 29l5-24M16 29L27 9" stroke="#fff0b0" stroke-width="1.500"/><path d="M21 12l3 6h7l-5 5 2 7-7-4-7 4 2-7-5-5h7Z" fill="#e87a1c" stroke="#a54"/>'), 'Shell'],
      [svg('<path d="M5 2h20l3 3v25H5Z" fill="#e8f8ff" stroke="#7bd"/><path d="M8 8h17M8 12h17M8 16h17M8 20h17M8 24h17" stroke="#2f86b8" stroke-width="2"/>'), 'Notepad'],
      [svg('<path d="M1 1h30v30H4l-3-3Z" fill="#2238b8"/><path d="M11 1h12v10H11Z" fill="#dde"/><path d="M18 2h4v7h-4Z" fill="#2238b8"/><path d="M5 15h22v16H5Z" fill="#fff"/><path d="M6 19h20M6 23h20M6 27h10" stroke="#c33"/><text x="17" y="30" font-size="8" font-weight="bold" font-family="Liberation Sans" fill="#333">64</text>'), 'Save'],
      [svg('<circle cx="16" cy="16" r="16" fill="#2a95e0"/><path d="M7 6l17 6q3 1 1 5l-3 6h2l-8 5 2-6h-2l2-3-5-1 3-1q-6-2-7-6l5 1Q8 10 7 6Z" fill="#fff"/>'), 'Ding'],
      [svg('<path d="M8 2h18l-2 4H11L6 28H1Z" fill="none" stroke="#3a7a4a"/><path d="M13 8h10q8 0 6 8t-11 8l-2 7h-6l2-8H6l1-4h8Z" fill="#15934a"/><path d="M17 12h5M16 17h5" stroke="#9dc9a4" stroke-width="2"/>'), 'Planner'],
      [svg('<path d="M8 1h18L20 26H1V9Z" fill="#3c66b8" stroke="#dde6f8"/><path d="M11 7l20 3-3 21-19-3Z" fill="#fff" stroke="#6f8fc8"/><path d="M22 13h7M22 17h6M21 21h6M12 25h14" stroke="#2b57a8" stroke-width="2"/><text x="8" y="20" font-family="Liberation Serif" font-size="15" font-weight="bold" fill="#1b3f90">W</text>'), 'Word'],
      [svg('<path d="M8 1h18L20 26H1V9Z" fill="#eef6e6" stroke="#4e9a2e" stroke-width="2"/><path d="M11 8l20 2-3 21-19-3Z" fill="#fff" stroke="#6fae52"/><path d="M17 14h6v4h-6ZM25 14h5v4h-5ZM13 20h7v4h-7ZM22 20h6v4h-6ZM14 26h5v3h-5ZM21 26h6v3h-6Z" fill="#58a83c"/><path d="M9 8l9 12M18 8L8 20" stroke="#2c6e1c" stroke-width="3"/>'), 'Excel', 'stack'],
      [icam, 'InCAM'],
      [svg('<path d="M2 1h7l21 28h-7Z" fill="#80108c" stroke="#201"/><path d="M27 2L5 29" stroke="#fff" stroke-width="3"/><path d="M28 2L6 29" stroke="#312" stroke-width="2"/>'), 'X server', 'stack on'],
      [icam, 'Genesis']
    ];
    return `<button class="start" aria-label="Start"><svg width="38" height="38" viewBox="0 0 38 38">
        <defs><radialGradient id="orb" cx=".5" cy=".9" r=".9"><stop offset="0" stop-color="#5fe0f8"/><stop offset=".5" stop-color="#1b6fa8"/><stop offset="1" stop-color="#0b2c58"/></radialGradient></defs>
        <circle cx="19" cy="19" r="18" fill="url(#orb)" stroke="#123"/><path d="M3 15A16 16 0 0 1 35 15Q19 22 3 15Z" fill="#fff" opacity=".3"/>
        <path d="M9 11q4-3 9 0l-2 8q-4-3-9 0Z" fill="#f0562c"/><path d="M19 11q5 3 10 0l-2 8q-5 3-10 0Z" fill="#8ccb3c"/>
        <path d="M7 20q4-3 9 0l-2 8q-4-3-9 0Z" fill="#4aa5ea"/><path d="M17 20q5 3 10 0l-2 8q-5 3-10 0Z" fill="#fccc34"/></svg></button>
    <div class="apps">${apps.map(([s, n, c = '']) => `<button class="${c}" aria-label="${n}">${s}</button>`).join('')}</div>
    <div class="tray">
      <svg width="15" height="14" viewBox="0 0 15 14"><path d="M.5 6.500h14v6H.5Z" fill="#888" stroke="#eee"/><path d="M2 8.500h11M2 10.500h11" stroke="#fff" stroke-dasharray="1 1"/><path d="M4 5q1-2 4-2t5-3" fill="none" stroke="#ddd"/></svg>
      <svg width="16" height="16" viewBox="0 0 16 16"><circle cx="8" cy="8" r="7" fill="#1c2cc0" stroke="#bcd"/><text x="5" y="12" font-family="Liberation Sans" font-weight="bold" font-size="12" fill="#fff">?</text></svg>
      <svg width="9" height="18" viewBox="0 0 9 18"><path d="M3 1.500h5v3H3ZM.5 3.500h5v3h-5Z" fill="#777" stroke="#fff"/><path d="M1 13h7l-3.500 4Z" fill="#fff"/></svg>
      <svg width="9" height="6" viewBox="0 0 9 6"><path d="M0 5.500L4.500 1 9 5.500Z" fill="#fff"/></svg>
      <svg width="16" height="16" viewBox="0 0 16 16"><path d="M1 5h3l4-4v14l-4-4H1Z" fill="#fff"/><path d="M10 5q2 3 0 6M12 3q3 5 0 10M14 2q3 6 0 12" stroke="#eee" fill="none"/></svg>
      <svg width="16" height="16" viewBox="0 0 16 16"><path d="M1 1v15" stroke="#fff" stroke-width="2"/><path d="M3 2q3-2 6 0t5 0v8H3Z" fill="#eee"/><circle cx="11" cy="11" r="5" fill="#d8262c"/><path d="M9 9l4 4M13 9l-4 4" stroke="#fff" stroke-width="1.500"/></svg>
      <svg width="17" height="16" viewBox="0 0 17 16"><path d="M5 4h11v8H5Z" fill="#566" stroke="#fff" stroke-width="1.500"/><path d="M7 15h8M11 12v3M2 1v4M5 1v3M1 5h4v3H1ZM3 8v5h2" stroke="#fff" fill="none"/></svg>
      <time>21:01<br>2021/11/10</time><div class="peek"></div>
    </div>`;
  }
}

/***************************************************
 * REGISTRATION
 ***************************************************/
customElements.define('motif-button', MotifButton);
customElements.define('motif-option', MotifOption);
customElements.define('motif-scroll', MotifScroll);
customElements.define('motif-list', MotifList);
customElements.define('tool-button', ToolButton);
customElements.define('menu-bar', MenuBar);
customElements.define('brand-panel', BrandPanel);
customElements.define('layer-list', LayerList);
customElements.define('board-view', BoardView);
customElements.define('value-chart', ValueChart);
customElements.define('results-viewer', ResultsViewer);
customElements.define('checklist-editor', ChecklistEditor);
customElements.define('results-histogram', ResultsHistogram);
customElements.define('aero-window', AeroWindow);
customElements.define('main-window', MainWindow);
customElements.define('task-bar', TaskBar);
customElements.define('desk-top', DeskTop);
</script>
</body>
</html>
